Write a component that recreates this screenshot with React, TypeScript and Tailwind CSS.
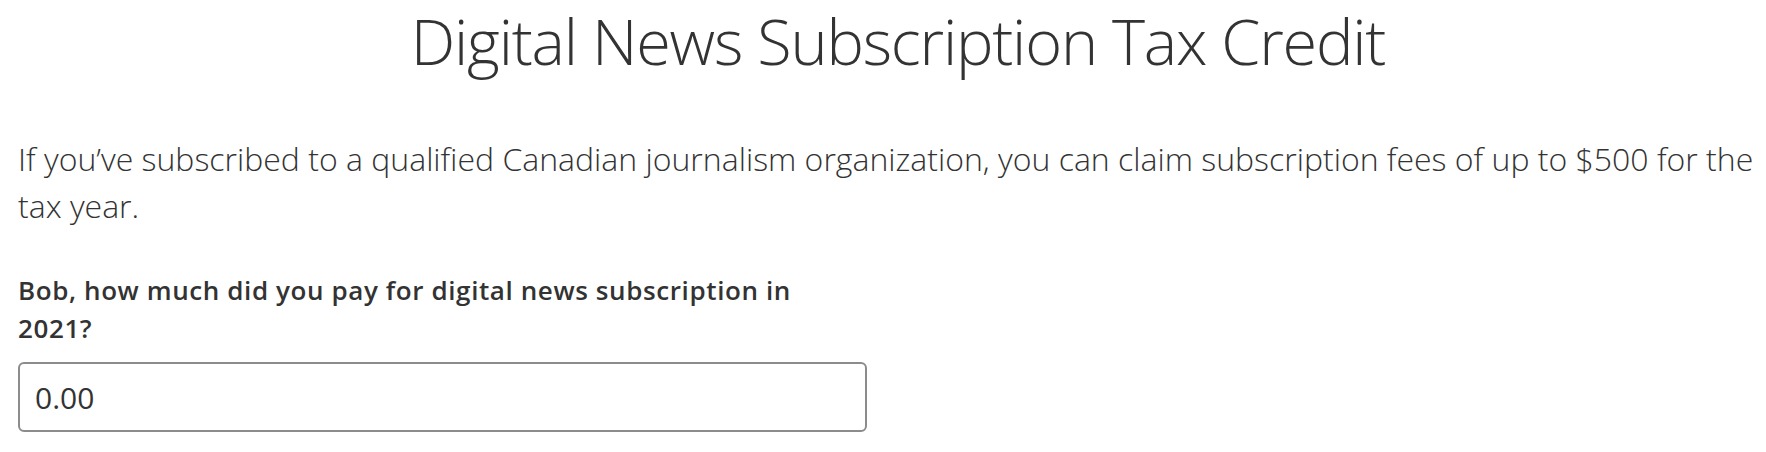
import React from 'react';

export default function App() {
  return (
    <div className="min-h-screen bg-white pl-[18px] text-[#333333] font-['Open_Sans',sans-serif]">
      <h1 className="mt-[3px] pl-[12px] text-center text-[63px] font-light leading-[76px] tracking-[-1.2px]">
        Digital News Subscription Tax Credit
      </h1>
      <p className="mt-[56px] text-[32px] font-light leading-[47px]">
        If you’ve subscribed to a qualified Canadian journalism organization, you can claim subscription fees of up to $500 for the tax year.
      </p>
      <form className="mt-[42px] w-[849px]">
        <label htmlFor="amount" className="block max-w-[800px] text-[26px] font-semibold leading-[38px] tracking-[0.6px]">
          Bob, how much did you pay for digital news subscription in 2021?
        </label>
        <input
          id="amount"
          type="text"
          defaultValue="0.00"
          className="mt-[15px] block h-[70px] w-full rounded-[6px] border-2 border-[#8c8c8c] px-[15px] text-[30px] text-[#333333] outline-none"
        />
      </form>
    </div>
  );
}
